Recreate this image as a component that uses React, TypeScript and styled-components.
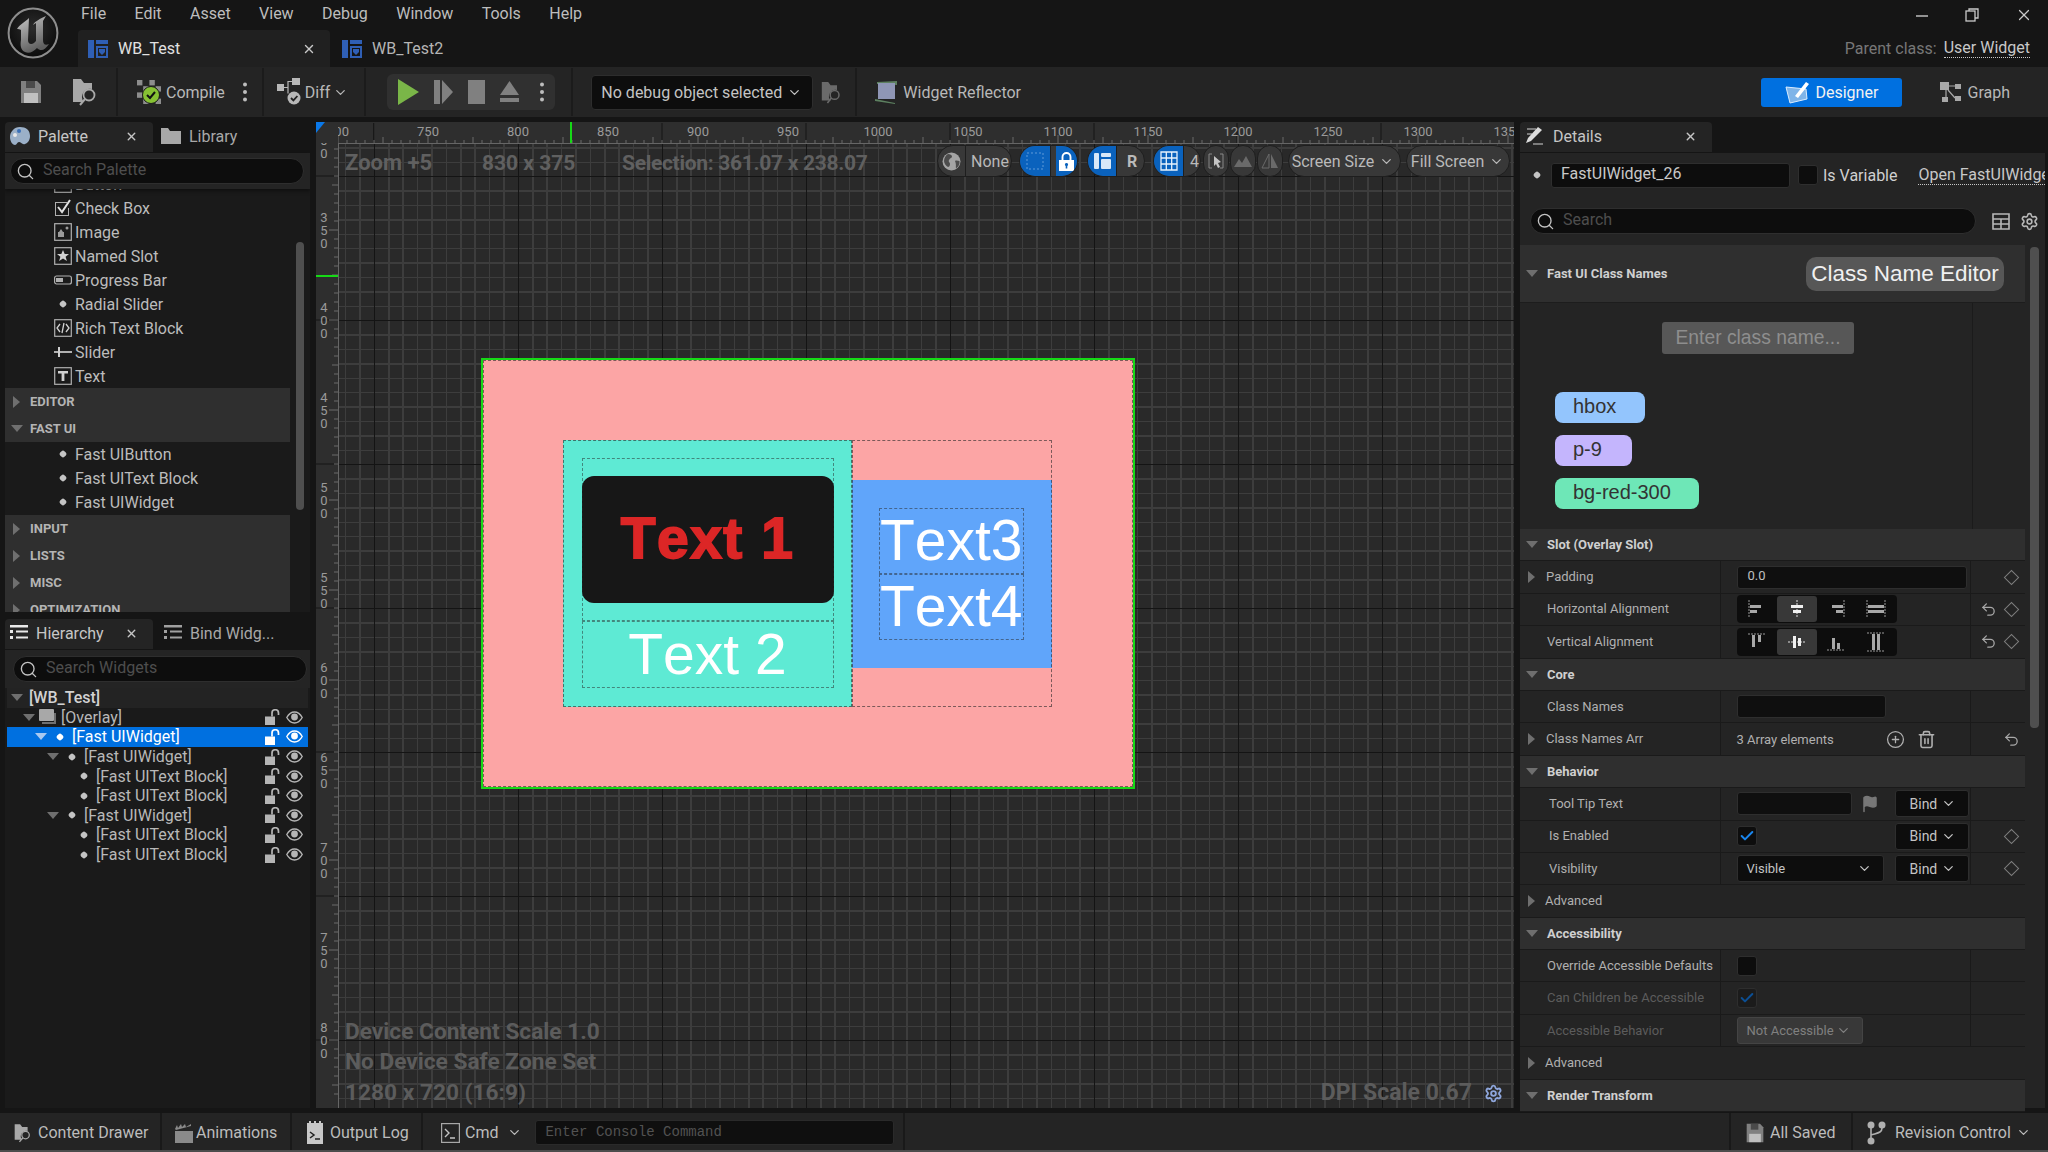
import React from "react";
import styled, { createGlobalStyle } from "styled-components";
import { ChevronDown, CirclePlus, Search, Settings, Trash2, Undo2, X, Check, Flag } from "lucide-react";

const GlobalStyle = createGlobalStyle`
html, body { margin: 0; padding: 0; background: #151515; }
* { box-sizing: border-box; }
`

const Page = styled.div`
width: 2048px;
height: 1152px;
overflow: hidden;
display: flex;
flex-direction: column;
background: #151515;
color: #c0c0c0;
font-family: Roboto, "Liberation Sans", sans-serif;
font-size: 16px;
`

/* ---------- title bar ---------- */
const TitleBar = styled.div`
height: 67px;
display: flex;
flex-shrink: 0;
`
const LogoSlot = styled.div`
width: 78px;
display: flex;
padding: 7px 0 0 7px;
`
const TitleMiddle = styled.div`
flex: 1;
display: flex;
flex-direction: column;
`
const MenuRow = styled.div`
height: 30px;
display: flex;
gap: 28.4px;
padding: 4px 0 0 3px;
color: #bdbdbd;
line-height: 19px;
`
const TabRow = styled.div`
height: 37px;
display: flex;
`
const DocTab = styled.div<{ $active?: boolean }>`
width: ${p => (p.$active ? "252px" : "auto")};
display: flex;
align-items: center;
gap: 10px;
padding: 0 14px 0 ${p => (p.$active ? "10px" : "12px")};
background: ${p => (p.$active ? "#202020" : "transparent")};
border-radius: 4px 4px 0 0;
color: ${p => (p.$active ? "#e2e2e2" : "#b5b5b5")};
`
const CloseIcon = styled(X)`
margin-left: auto;
flex-shrink: 0;
`
const TitleRight = styled.div`
width: 260px;
display: flex;
flex-direction: column;
align-items: flex-end;
padding-right: 18px;
`
const WindowButtons = styled.div`
height: 30px;
display: flex;
align-items: center;
gap: 36px;
margin-right: -3px;
color: #c9c9c9;
`
const ParentLine = styled.div`
height: 37px;
display: flex;
align-items: center;
gap: 7px;
color: #777;
`
const LinkText = styled.span`
color: #c8c8c8;
border-bottom: 1px dotted #c8c8c8;
line-height: 18px;
white-space: nowrap;
`

/* ---------- main toolbar ---------- */
const Toolbar = styled.div`
height: 50px;
flex-shrink: 0;
display: flex;
align-items: center;
background: #242424;
color: #b8b8b8;
`
const ToolItem = styled.div<{ $ml: number; $gap?: number }>`
margin-left: ${p => p.$ml}px;
display: flex;
align-items: center;
gap: ${p => p.$gap || 4}px;
flex-shrink: 0;
`
const ToolSep = styled.div<{ $ml: number; $hidden?: boolean }>`
margin-left: ${p => p.$ml}px;
width: 2px;
height: 48px;
background: ${p => (p.$hidden ? "transparent" : "#1b1b1b")};
flex-shrink: 0;
`
const PlayGroup = styled.div`
margin-left: 21px;
width: 168px;
height: 36px;
display: flex;
align-items: center;
background: #303030;
border-radius: 6px;
padding-left: 11px;
gap: 15px;
flex-shrink: 0;
`
const DebugSelect = styled.div`
margin-left: 18px;
width: 222px;
height: 35px;
display: flex;
align-items: center;
justify-content: space-between;
padding: 0 10px 0 9px;
background: #0d0d0d;
border: 1px solid #2d2d2d;
border-radius: 4px;
color: #c4c4c4;
white-space: nowrap;
flex-shrink: 0;
`
const DesignerButton = styled.div`
margin-left: auto;
width: 141px;
height: 29px;
display: flex;
align-items: center;
gap: 4px;
padding-left: 24px;
border-radius: 3px;
background: #0070e0;
color: #f2f2f2;
flex-shrink: 0;
`

/* ---------- main area ---------- */
const Main = styled.div`
height: 996px;
flex-shrink: 0;
display: flex;
padding: 5px 3px 5px 5px;
gap: 6px;
`
const LeftColumn = styled.div`
width: 305px;
display: flex;
flex-direction: column;
gap: 7px;
`
const PanelTabs = styled.div`
height: 30px;
display: flex;
flex-shrink: 0;
margin-bottom: 1px;
`
const PanelTab = styled.div<{ $active?: boolean; $w: number; $pl?: number; $gap?: number }>`
width: ${p => p.$w}px;
display: flex;
align-items: center;
gap: ${p => p.$gap || 8}px;
padding-left: ${p => p.$pl || (p.$active ? 5 : 8)}px;
padding-right: 15px;
padding-bottom: 2px;
background: ${p => (p.$active ? "#242424" : "transparent")};
border-radius: 4px 4px 0 0;
color: ${p => (p.$active ? "#c6c6c6" : "#a8a8a8")};
white-space: nowrap;
& > svg { flex-shrink: 0; }
`
const PalettePanel = styled.div`
height: 490px;
display: flex;
flex-direction: column;
position: relative;
overflow: hidden;
flex-shrink: 0;
`
const SearchBand = styled.div`
height: 36px;
flex-shrink: 0;
display: flex;
align-items: center;
padding: 0 6px 0 5px;
background: #242424;
position: relative;
z-index: 1;
box-shadow: 0 2px 4px rgba(0, 0, 0, 0.45);
`
const SearchField = styled.div<{ $w?: number }>`
width: ${p => (p.$w ? `${p.$w}px` : "100%")};
height: 26px;
display: flex;
align-items: center;
gap: 8px;
padding-left: 5px;
background: #0d0d0d;
border: 1px solid #2e2e2e;
border-radius: 13px;
color: #4e4e4e;
flex-shrink: 0;
& > svg { color: #c4c4c4; }
`
const SearchHint = styled.span`
margin-top: -3px;
`
const PaletteList = styled.div`
flex: 1;
background: #1a1a1a;
overflow: hidden;
`
const PaletteItem = styled.div<{ $clipped?: boolean }>`
height: 24px;
margin-top: ${p => (p.$clipped ? "-17px" : "0")};
display: flex;
align-items: center;
padding-left: 48px;
gap: 3px;
color: #bcbcbc;
`
const IconSlot = styled.span`
width: 19px;
display: flex;
justify-content: center;
`
const PaletteGroup = styled.div`
padding-bottom: 1px;
`
const CatHeader = styled.div`
height: 27px;
width: 285px;
display: flex;
align-items: center;
background: #2f2f2f;
color: #b4b4b4;
font-size: 13px;
font-weight: 700;
padding-left: 5px;
gap: 7px;
& > span:first-child { width: 13px; }
`
const CaretBox = styled.span`
display: flex;
justify-content: center;
align-items: center;
`
const Caret = styled.span<{ $open?: boolean; $white?: boolean }>`
display: block;
width: 0;
height: 0;
${p =>
    p.$open
        ? `border-left: 6px solid transparent; border-right: 6px solid transparent; border-top: 7px solid ${p.$white ? "#a8c8f0" : "#6f6f6f"};`
        : `border-top: 6px solid transparent; border-bottom: 6px solid transparent; border-left: 7px solid #6f6f6f;`}
`
const Dot = styled.span<{ $light?: boolean }>`
display: block;
width: 6px;
height: 6px;
border-radius: 2px;
transform: rotate(45deg);
background: ${p => (p.$light ? "#ffffff" : "#c4c4c4")};
`
const PaletteScroll = styled.div`
position: absolute;
left: 291px;
top: 120px;
width: 8px;
height: 268px;
border-radius: 4px;
background: #4f4f4f;
`
const HierarchyPanel = styled.div`
flex: 1;
display: flex;
flex-direction: column;
overflow: hidden;
`
const HierarchySearch = styled.div`
height: 38px;
flex-shrink: 0;
display: flex;
align-items: center;
padding: 0 3px 0 8px;
background: #242424;
`
const TreeBox = styled.div`
flex: 1;
background: #1a1a1a;
padding: 0 2px 0 2px;
`
const TreeRow = styled.div<{ $depth: number; $selected?: boolean; $root?: boolean }>`
height: 19.6px;
display: flex;
align-items: center;
padding-left: ${p => 4 + 12 * p.$depth}px;
padding-right: 5px;
background: ${p => (p.$selected ? "#0070e0" : p.$root ? "#232323" : "transparent")};
color: ${p => (p.$selected ? "#ffffff" : p.$root ? "#d2d2d2" : "#b8b8b8")};
font-weight: ${p => (p.$root ? 500 : 400)};
white-space: nowrap;
`
const TreeArrow = styled.span`
width: 12px;
display: flex;
justify-content: center;
flex-shrink: 0;
`
const TreeIcon = styled.span<{ $w: number }>`
width: ${p => p.$w}px;
display: flex;
justify-content: center;
flex-shrink: 0;
`
const TreeActions = styled.span`
margin-left: auto;
display: flex;
align-items: center;
gap: 6px;
`

/* ---------- designer canvas ---------- */
const Center = styled.div`
width: 1198px;
display: grid;
grid-template-columns: 22px 1fr;
grid-template-rows: 21px 1fr;
background: #2e2e2e;
overflow: hidden;
`
const Corner = styled.div`
width: 0;
height: 0;
border-top: 11px solid #0a78e8;
border-right: 9px solid transparent;
`
const Canvas = styled.div`
position: relative;
overflow: hidden;
background-color: #292929;
background-image:
    repeating-linear-gradient(to right, transparent 0 34.7px, #141414 34.7px 36px, transparent 36px 144px),
    repeating-linear-gradient(to bottom, transparent 0 32px, #141414 32px 33.3px, transparent 33.3px 144px),
    repeating-linear-gradient(to right, transparent 0 5.9px, #3d3d3d 5.9px 7.4px, transparent 7.4px 14.4px),
    repeating-linear-gradient(to bottom, transparent 0 3.2px, #3d3d3d 3.2px 4.7px, transparent 4.7px 14.4px);
border-top: 1px solid #666;
border-left: 1px solid #666;
`
const ZoomInfo = styled.div`
position: absolute;
left: 6px;
top: 5px;
display: flex;
color: #606060;
font-size: 21px;
font-weight: 700;
line-height: 28px;
white-space: nowrap;
`
const ZoomPart = styled.span<{ $w: number; $fs?: number; $ls?: number }>`
width: ${p => p.$w}px;
font-size: ${p => p.$fs || 21}px;
letter-spacing: ${p => p.$ls || 0}px;
`
const DeviceInfo = styled.div`
position: absolute;
left: 6px;
bottom: 0;
color: #5c5c5c;
font-size: 22.7px;
font-weight: 700;
line-height: 30.5px;
white-space: nowrap;
`
const DpiInfo = styled.div`
position: absolute;
right: 11px;
bottom: 0;
display: flex;
align-items: center;
gap: 12px;
color: #5c5c5c;
font-size: 23px;
font-weight: 700;
line-height: 30px;
`
const ViewBar = styled.div`
position: absolute;
left: 598px;
top: 1px;
display: flex;
`
const Pill = styled.div<{ $ml: number; $w: number; $dim?: boolean; $pr?: number }>`
margin-left: ${p => p.$ml}px;
width: ${p => p.$w}px;
height: 32px;
display: flex;
align-items: center;
justify-content: center;
overflow: hidden;
border-radius: 16px;
padding-right: ${p => p.$pr || 0}px;
background: #383838;
border: 1px solid #1e1e1e;
color: ${p => (p.$dim ? "#6a6a6a" : "#bababa")};
white-space: nowrap;
flex-shrink: 0;
gap: 5px;
`
const PillSeg = styled.div<{ $w: number; $active?: boolean; $pr?: number }>`
width: ${p => p.$w}px;
height: 100%;
display: flex;
align-items: center;
justify-content: center;
padding-right: ${p => p.$pr || 0}px;
background: ${p => (p.$active ? "#0a62bd" : "transparent")};
border-right: 1px solid #1e1e1e;
flex-shrink: 0;
color: ${p => (p.$active ? "#ffffff" : "#bababa")};
&:last-child { border-right: none; flex: 1; }
`
const Artboard = styled.div`
position: absolute;
left: 142px;
top: 214px;
width: 654px;
height: 431px;
border: 2px solid #16d916;
background: #fca5a5;
padding: 80px;
display: flex;
outline: 1px dashed rgba(40, 40, 40, 0.6);
outline-offset: -3px;
font-family: "Liberation Sans", Arial, sans-serif;
font-size: 57px;
font-kerning: none;
color: #fff;
`
const LeftBlock = styled.div`
width: 289px;
height: 267px;
background: #5eead4;
padding: 18px 18.5px;
outline: 1px dashed rgba(40, 40, 40, 0.6);
outline-offset: -1px;
display: flex;
flex-direction: column;
`
const BlockTop = styled.div`
height: 163px;
padding: 18px 0;
outline: 1px dashed rgba(40, 40, 40, 0.5);
outline-offset: -1px;
`
const BlackCard = styled.div`
height: 127px;
border-radius: 12px;
background: #171717;
color: #dc2626;
font-weight: 700;
letter-spacing: 1.5px;
-webkit-text-stroke: 1.8px #dc2626;
padding-bottom: 4px;
display: flex;
align-items: center;
justify-content: center;
`
const TextBox = styled.div<{ $h: number }>`
height: ${p => p.$h}px;
display: flex;
align-items: center;
justify-content: center;
padding-bottom: 2px;
outline: 1px dashed rgba(40, 40, 40, 0.5);
outline-offset: -1px;
white-space: nowrap;
`
const RightBlock = styled.div`
width: 199.5px;
height: 267px;
display: flex;
align-items: center;
outline: 1px dashed rgba(40, 40, 40, 0.6);
outline-offset: -1px;
`
const BlueCard = styled.div`
width: 100%;
height: 188px;
background: #60a5fa;
padding: 28px 27.5px 0 26.5px;
display: flex;
flex-direction: column;
`

/* ---------- details ---------- */
const RightColumn = styled.div`
width: 525px;
display: flex;
flex-direction: column;
`
const DetailsTop = styled.div`
flex: 1;
background: #242424;
display: flex;
flex-direction: column;
min-height: 0;
`
const NameRow = styled.div`
height: 47px;
flex-shrink: 0;
display: flex;
align-items: flex-start;
padding-top: 10px;
padding-left: 14px;
white-space: nowrap;
overflow: hidden;
`
const NameInput = styled.div`
width: 239px;
height: 25px;
margin-left: 11px;
padding-left: 9px;
background: #0d0d0d;
border: 1px solid #2e2e2e;
border-radius: 3px;
color: #c8c8c8;
line-height: 20px;
flex-shrink: 0;
`
const CheckBox = styled.span<{ $dim?: boolean }>`
width: 20px;
height: 20px;
display: flex;
align-items: center;
justify-content: center;
background: ${p => (p.$dim ? "#1b1b1b" : "#0d0d0d")};
border: 1px solid #2e2e2e;
border-radius: 3px;
color: ${p => (p.$dim ? "#0c4f94" : "#1a86ee")};
flex-shrink: 0;
`
const DetailsSearch = styled.div`
height: 45px;
flex-shrink: 0;
display: flex;
align-items: flex-start;
padding: 8px 0 0 10px;
color: #b8b8b8;
`
const DetailsBody = styled.div`
flex: 1;
display: flex;
min-height: 0;
`
const Rows = styled.div`
width: 505px;
display: flex;
flex-direction: column;
flex-shrink: 0;
`
const DetailsScroll = styled.div`
width: 9px;
height: 481px;
margin: 2px 0 0 5px;
border-radius: 4px;
background: #4f4f4f;
`
const ClassHeader = styled.div`
height: 58px;
flex-shrink: 0;
display: flex;
align-items: center;
background: #2f2f2f;
padding-left: 6px;
gap: 9px;
color: #cfcfcf;
font-size: 13px;
font-weight: 700;
border-bottom: 1px solid #1d1d1d;
`
const EditorButton = styled.div`
margin-left: auto;
margin-right: 21px;
width: 198px;
height: 34px;
border-radius: 10px;
background: #575757;
color: #f0f0f0;
font-family: "Liberation Sans", Arial, sans-serif;
font-weight: 400;
font-size: 22.5px;
display: flex;
align-items: center;
justify-content: center;
white-space: nowrap;
`
const ClassBody = styled.div`
height: 226px;
flex-shrink: 0;
width: 453px;
border-right: 1px solid #1b1b1b;
padding: 19px 0 0 35px;
display: flex;
flex-direction: column;
align-items: flex-start;
font-family: "Liberation Sans", Arial, sans-serif;
`
const ClassInput = styled.div`
width: 192px;
height: 32px;
margin-left: 107px;
margin-bottom: 38px;
border-radius: 3px;
background: #575757;
color: #8e8e8e;
font-size: 19.3px;
display: flex;
align-items: center;
justify-content: center;
white-space: nowrap;
`
const Chip = styled.div<{ $bg: string; $w: number }>`
width: ${p => p.$w}px;
height: 31px;
margin-bottom: 12px;
padding-left: 18px;
border-radius: 8px;
background: ${p => p.$bg};
color: #333;
font-size: 20px;
line-height: 29px;
`
const SectionRow = styled.div`
height: 32.4px;
flex-shrink: 0;
display: flex;
align-items: center;
padding-left: 6px;
gap: 9px;
background: #2f2f2f;
border-bottom: 1px solid #1a1a1a;
color: #cfcfcf;
font-size: 13px;
font-weight: 700;
`
const AdvancedRow = styled(SectionRow)`
background: #242424;
font-weight: 400;
color: #b0b0b0;
padding-left: 8px;
gap: 10px;
`
const PropRow = styled.div`
height: 32.4px;
flex-shrink: 0;
display: grid;
grid-template-columns: 201px 249.5px 1fr;
background: #242424;
border-bottom: 1px solid #1a1a1a;
font-size: 13px;
`
const PropLabel = styled.div<{ $dim?: boolean; $x: number }>`
display: flex;
align-items: center;
padding-left: ${p => p.$x}px;
padding-bottom: 1px;
color: ${p => (p.$dim ? "#5c5c5c" : "#b0b0b0")};
border-right: 1px solid #1a1a1a;
white-space: nowrap;
gap: 11px;
`
const PropValue = styled.div`
display: flex;
align-items: center;
padding-left: 15.5px;
border-right: 1px solid #1a1a1a;
color: #b0b0b0;
white-space: nowrap;
`
const PropEnd = styled.div`
display: flex;
align-items: center;
justify-content: flex-end;
gap: 9px;
padding-right: 5px;
color: #a8a8a8;
`
const FieldBox = styled.div<{ $w: number }>`
width: ${p => p.$w}px;
height: 23px;
padding-left: 10px;
background: #0f0f0f;
border: 1px solid #2e2e2e;
border-radius: 3px;
color: #c0c0c0;
line-height: 17px;
flex-shrink: 0;
`
const AlignGroup = styled.div`
width: 160px;
height: 28px;
display: flex;
padding: 1px;
background: #0d0d0d;
border-radius: 4px;
`
const AlignCell = styled.div<{ $active?: boolean }>`
flex: 1;
display: flex;
align-items: center;
justify-content: center;
border-radius: 3px;
background: ${p => (p.$active ? "#383838" : "transparent")};
`
const Dropdown = styled.div<{ $w: number; $ml?: number; $dim?: boolean }>`
width: ${p => p.$w}px;
height: 27px;
margin-left: ${p => p.$ml || 0}px;
display: flex;
align-items: center;
justify-content: space-between;
padding: 0 11px 0 9px;
background: ${p => (p.$dim ? "#383838" : "#0d0d0d")};
border: 1px solid ${p => (p.$dim ? "#444" : "#2e2e2e")};
border-radius: 3px;
color: ${p => (p.$dim ? "#808080" : "#c4c4c4")};
flex-shrink: 0;
`
const BindBox = styled(Dropdown)`
font-size: 14px;
padding: 0 12px 0 14px;
`
const Diamond = styled.span`
width: 11px;
height: 11px;
margin-right: 3px;
border: 1px solid #7d7d7d;
transform: rotate(45deg);
flex-shrink: 0;
`

/* ---------- status bar ---------- */
const StatusBar = styled.div`
height: 39px;
flex-shrink: 0;
display: flex;
background: #242424;
border-bottom: 2px solid #4c4c4c;
color: #bcbcbc;
padding-left: 2px;
`
const StatusItem = styled.div<{ $w: number; $pl: number; $gap: number; $last?: boolean }>`
width: ${p => p.$w}px;
display: flex;
align-items: center;
gap: ${p => p.$gap}px;
padding-left: ${p => p.$pl}px;
padding-top: 2px;
border-right: ${p => (p.$last ? "none" : "2px solid #191919")};
white-space: nowrap;
flex-shrink: 0;
`
const ConsoleInput = styled.div`
width: 359px;
height: 25px;
margin-left: 8px;
padding-left: 9px;
background: #0f0f0f;
border: 1px solid #2a2a2a;
border-radius: 3px;
color: #525252;
font-family: "Liberation Mono", monospace;
font-size: 14px;
line-height: 22px;
`
const StatusSpacer = styled.div`
flex: 1;
border-right: 2px solid #191919;
`

/* ---------- icons ---------- */
const UeLogo = () => (
    <svg width="52" height="52" viewBox="0 0 52 52">
        <defs>
            <linearGradient id="ueU" x1="0" y1="0" x2="0.4" y2="1">
                <stop offset="0" stopColor="#c8c8c8" />
                <stop offset="1" stopColor="#5f5f5f" />
            </linearGradient>
            <radialGradient id="ueBg" cx="0.5" cy="0.4" r="0.6">
                <stop offset="0" stopColor="#2c2c2c" />
                <stop offset="1" stopColor="#0c0c0c" />
            </radialGradient>
        </defs>
        <circle cx="26" cy="26" r="24.4" fill="url(#ueBg)" stroke="#8d8d8d" strokeWidth="2" />
        <path d="M10 22C13 17 18 15 22 11L21 33C21 37 24 38 27 36L29 34L29 16L26 18C28 14 33 12 39 9L36 14L36 33C36 37 38 39 42 37C38 43 34 45 30 41C26 45 22 47 18 45C14 43 13 39 14 33L14 23C13 22 11 22 10 22Z" fill="url(#ueU)" />
    </svg>
);

const BlueprintIcon = () => (
    <svg width="20" height="20" viewBox="0 0 20 20">
        <rect x="0" y="1" width="6" height="18" fill="#2f5fb5" />
        <rect x="8" y="1" width="12" height="4" fill="#2f5fb5" />
        <path d="M8 7h12v12h-12z M10 9v8h8v-8z" fill="#2f5fb5" fillRule="evenodd" />
        <path d="M11 10h6v3l-3 3l-3-3z" fill="#2f5fb5" />
    </svg>
);

const FloppyIcon = ({ size = 24 }: { size?: number }) => (
    <svg width={size} height={size} viewBox="0 0 24 24">
        <path d="M2 1h16l4 4v18H2z" fill="#808080" />
        <rect x="7" y="1" width="9" height="7" fill="#4a4a4a" />
        <rect x="5" y="13" width="14" height="10" fill="#c0c0c0" />
    </svg>
);

const FolderSearchIcon = ({ w = 25, c = "#a8a8a8" }: { w?: number; c?: string }) => (
    <svg width={w} height={w + 3} viewBox="0 0 25 28">
        <path d="M1 1h8l3 4h8v6a8 8 0 0 0-8 13H1z" fill={c} />
        <circle cx="17" cy="17" r="5.5" fill="none" stroke={c} strokeWidth="1.8" />
        <path d="M13 21l-5 6" stroke={c} strokeWidth="2" />
    </svg>
);

const CompileIcon = () => (
    <svg width="25" height="25" viewBox="0 0 25 25">
        {[0, 1, 2, 3].map(r =>
            [0, 1, 2, 3].map(c =>
                (r + c) % 2 === 0 ? <rect key={`${r}${c}`} x={c * 6.2} y={r * 6.2} width="5.4" height="5.4" fill="#8d8d8d" /> : null
            )
        )}
        <circle cx="14" cy="15" r="8.5" fill="#86c133" stroke="#1c1c1c" strokeWidth="1" />
        <path d="M10 15l3 3l5-6" fill="none" stroke="#111" strokeWidth="2" />
    </svg>
);

const Kebab = ({ c = "#bdbdbd" }: { c?: string }) => (
    <svg width="6" height="22" viewBox="0 0 6 22">
        <circle cx="3" cy="3.5" r="2" fill={c} />
        <circle cx="3" cy="11" r="2" fill={c} />
        <circle cx="3" cy="18.5" r="2" fill={c} />
    </svg>
);

const DiffIcon = () => (
    <svg width="25" height="28" viewBox="0 0 25 28">
        <rect x="0" y="6" width="7" height="7" fill="#b8b8b8" />
        <rect x="15" y="0" width="8" height="7" fill="#b8b8b8" />
        <path d="M7 9.5h4V3.5h4M11 9.5v6" stroke="#b8b8b8" strokeWidth="1.2" fill="none" />
        <circle cx="17" cy="20" r="6.5" fill="#b8b8b8" />
        <path d="M14 20l2.4 2.4l4-4.4" stroke="#222" strokeWidth="1.8" fill="none" />
    </svg>
);

const ReflectorIcon = () => (
    <svg width="23" height="24" viewBox="0 0 23 24">
        <path d="M2 2l20-1v4l-20-1z" fill="#5d8060" />
        <rect x="3" y="3" width="17" height="16" fill="#8f96b5" />
        <path d="M0 19l20 4v1l-20-3z" fill="#5d8060" />
    </svg>
);

const DesignerIcon = () => (
    <svg width="26" height="24" viewBox="0 0 26 24">
        <path d="M1 7l20 2l1 10l-17 4z" fill="#7fb4e8" stroke="#d9ecff" strokeWidth="1" />
        <path d="M10 16L21 2l3 2L13 18z" fill="#fff" />
    </svg>
);

const GraphIcon = () => (
    <svg width="22" height="21" viewBox="0 0 22 21">
        <rect x="0" y="0" width="9" height="8" fill="#a8a8a8" />
        <rect x="15" y="2" width="6" height="5" fill="#a8a8a8" />
        <rect x="2" y="15" width="6" height="5" fill="#a8a8a8" />
        <rect x="15" y="14" width="6" height="5" fill="#a8a8a8" />
        <path d="M9 4h6M6 8v7M8 8l7 8" stroke="#a8a8a8" strokeWidth="1.2" fill="none" />
    </svg>
);

const PaletteIcon = () => (
    <svg width="20" height="20" viewBox="0 0 20 20">
        <path d="M10 1C4 1 0 6 0 11c0 5 3 8 5 8c2 0 2-3 4-3c2 0 3 3 6 2c3-1 5-4 5-8c0-6-4-9-10-9z" fill="#9bb0c8" />
        <circle cx="5" cy="9" r="2" fill="#e8e8e8" />
        <circle cx="9" cy="5" r="2" fill="#3a70b8" />
    </svg>
);

const FolderIcon = () => (
    <svg width="20" height="18" viewBox="0 0 20 18">
        <path d="M0 1h7l2 3h11v13H0z" fill="#a8a8a8" />
    </svg>
);

const ListIcon = ({ c }: { c: string }) => (
    <svg width="18" height="16" viewBox="0 0 18 16">
        <rect x="0" y="0" width="18" height="2.5" fill={c} />
        <rect x="0" y="5" width="3" height="3" fill={c} />
        <rect x="6" y="5.5" width="12" height="2" fill={c} />
        <rect x="0" y="11" width="3" height="3" fill={c} />
        <rect x="6" y="11.5" width="12" height="2" fill={c} />
    </svg>
);

const DetailsIcon = () => (
    <svg width="19" height="20" viewBox="0 0 19 20">
        <path d="M2 3h9M2 8h5M8 18h10" stroke="#999" strokeWidth="1.4" />
        <path d="M1 17l2-5L13 1l4 3L6 15z" fill="#dcdcdc" />
    </svg>
);

const FramedIcon = ({ children }: { children: React.ReactNode }) => (
    <svg width="18" height="18" viewBox="0 0 18 18">
        <rect x="0.7" y="0.7" width="16.6" height="16.6" fill="none" stroke="#b0b0b0" strokeWidth="1.2" />
        {children}
    </svg>
);

const OverlayIcon = () => (
    <svg width="18" height="17" viewBox="0 0 18 17">
        <rect x="0" y="0" width="15" height="12" rx="1" fill="#a8a8a8" />
        <path d="M3 13h12v-9h2v11H3z" fill="#707070" />
    </svg>
);

const OpenLockIcon = ({ c }: { c: string }) => (
    <svg width="15" height="16" viewBox="0 0 15 16">
        <rect x="0" y="7.5" width="10" height="8.5" fill={c} />
        <path d="M7 7.5V4a3 3 0 0 1 6.5 0v2" fill="none" stroke={c} strokeWidth="1.7" />
    </svg>
);

const EyeIcon = ({ c }: { c: string }) => (
    <svg width="17" height="13" viewBox="0 0 17 13">
        <path d="M0.8 6.5C3 2.5 6 1 8.5 1s5.5 1.5 7.7 5.5C14 10.5 11 12 8.5 12S3 10.5 0.8 6.5z" fill="none" stroke={c} strokeWidth="1.4" />
        <circle cx="8.5" cy="6" r="3.4" fill={c} />
    </svg>
);

const ClosedLockIcon = () => (
    <svg width="15" height="19" viewBox="0 0 15 19">
        <path d="M0 8h15v11H0z M7.5 11a1.6 1.6 0 0 0-.8 3v2.5h1.6V14a1.6 1.6 0 0 0-.8-3z" fill="#fff" fillRule="evenodd" />
        <path d="M3.5 8V5a4 4 0 0 1 8 0v3" fill="none" stroke="#fff" strokeWidth="1.9" />
    </svg>
);

const GlobeIcon = () => (
    <svg width="19" height="19" viewBox="0 0 19 19">
        <circle cx="9.5" cy="9.5" r="9" fill="#a4a4a4" />
        <path d="M6 2c2 0 4 1 4 2.5s-2 1.5-3 3.5s1 2 1 4s-1 3-2 3c-2-1-4-3.5-4-6c0-3 2-6 4-7zM13 9c1.5-1 3 0 4.5 0c.5 3-1 5.5-3.5 7.5c-.5-2.5.5-3.5-1-7.500z" fill="#4c4c4c" />
    </svg>
);

const TinyChevron = ({ c }: { c?: string }) => <ChevronDown size={15} strokeWidth={2} color={c || "currentColor"} />;

const AlignIcon = ({ kind, active }: { kind: string; active?: boolean }) => {
    const c = active ? "#f0f0f0" : "#a8a8a8";
    const guide = active ? "#e0e0e0" : "#9a9a9a";
    const hori: Record<string, React.ReactNode> = {
        hl: <><path d="M2 1v18" stroke={guide} strokeDasharray="2 1" /><rect x="3" y="6" width="11" height="3" fill={c} /><rect x="3" y="11" width="7" height="3" fill={c} /></>,
        hc: <><path d="M10 1v18" stroke={guide} strokeDasharray="2 1" /><rect x="4" y="6" width="12" height="3" fill={c} /><rect x="6" y="11" width="8" height="3" fill={c} /></>,
        hr: <><path d="M18 1v18" stroke={guide} strokeDasharray="2 1" /><rect x="6" y="6" width="11" height="3" fill={c} /><rect x="10" y="11" width="7" height="3" fill={c} /></>,
        hf: <><path d="M1 1v18M19 1v18" stroke={guide} strokeDasharray="2 1" /><rect x="2" y="6" width="16" height="3" fill={c} /><rect x="2" y="11" width="16" height="3" fill={c} /></>,
        vt: <><path d="M1 2h18" stroke={guide} strokeDasharray="2 1" /><rect x="5" y="3" width="3" height="12" fill={c} /><rect x="11" y="3" width="3" height="7" fill={c} /></>,
        vc: <><path d="M1 10h18" stroke={guide} strokeDasharray="2 1" /><rect x="6" y="4" width="3" height="12" fill={c} /><rect x="11" y="6" width="3" height="8" fill={c} /></>,
        vb: <><path d="M1 18h18" stroke={guide} strokeDasharray="2 1" /><rect x="6" y="6" width="3" height="11" fill={c} /><rect x="11" y="11" width="3" height="6" fill={c} /></>,
        vf: <><path d="M1 1h18M1 19h18" stroke={guide} strokeDasharray="2 1" /><rect x="6" y="2" width="3" height="16" fill={c} /><rect x="11" y="2" width="3" height="16" fill={c} /></>,
    };
    return <svg width="20" height="20" viewBox="0 0 20 20">{hori[kind]}</svg>;
};

/* ---------- rulers ---------- */
const TopRuler = () => {
    const x0 = 338;
    const ticks: number[] = [];
    for (let u = 695; u <= 1360; u += 5) ticks.push(u);
    const labels = [700, 750, 800, 850, 900, 950, 1000, 1050, 1100, 1150, 1200, 1250, 1300, 1350];
    const majors = [373.7, 518, 662, 806, 950, 1094, 1237, 1381];
    return (
        <svg width="1176" height="21" viewBox="0 0 1176 21" style={{ display: "block" }}>
            {majors.map(m => <path key={m} d={`M${m - x0} 1V21`} stroke="#141414" />)}
            {ticks.map(u => {
                const x = 518 + (u - 800) * 1.8 - x0;
                const h = u % 50 === 0 ? 8 : u % 25 === 0 ? 6 : 3;
                return <path key={u} d={`M${x} ${21 - h}V21`} stroke="#6a6a6a" />;
            })}
            <path d={`M${571 - x0} 0V21`} stroke="#16d916" strokeWidth="2" />
            {labels.map(u => (
                <text key={u} x={518 + (u - 800) * 1.8 - x0} y="14" textAnchor="middle" fill="#9a9a9a" fontSize="13" fontFamily="Roboto, sans-serif">{u}</text>
            ))}
        </svg>
    );
};

const LeftRuler = () => {
    const y0 = 143;
    const ticks: number[] = [];
    for (let u = 290; u <= 830; u += 5) ticks.push(u);
    const labels = [300, 350, 400, 450, 500, 550, 600, 650, 700, 750, 800];
    const majors = [176, 320, 464, 608, 752, 896, 1040];
    return (
        <svg width="22" height="965" viewBox="0 0 22 965" style={{ display: "block" }}>
            {majors.map(m => <path key={m} d={`M0 ${m - y0}H22`} stroke="#141414" />)}
            {ticks.map(u => {
                const y = 320 + (u - 400) * 1.8 - y0;
                const w = u % 50 === 0 ? 9 : u % 25 === 0 ? 6 : 4;
                return <path key={u} d={`M${22 - w} ${y}H22`} stroke="#6a6a6a" />;
            })}
            <path d={`M0 ${276 - y0}H22`} stroke="#16d916" strokeWidth="2" />
            {labels.map(u =>
                String(u).split("").map((d, i) => (
                    <text key={`${u}${i}`} x="8" y={320 + (u - 400) * 1.8 - y0 + (i - 1) * 12.7 + 5} textAnchor="middle" fill="#9a9a9a" fontSize="13" fontFamily="Roboto, sans-serif">{d}</text>
                ))
            )}
        </svg>
    );
};

/* ---------- data ---------- */
const menus = ["File", "Edit", "Asset", "View", "Debug", "Window", "Tools", "Help"];

const paletteIcons: Record<string, React.ReactNode> = {
    "Button": <FramedIcon>{null}</FramedIcon>,
    "Check Box": <svg width="18" height="18" viewBox="0 0 18 18"><path d="M1 3h12v1H2v12h12V9h1v8H1z" fill="#b0b0b0" /><path d="M4 8l4 5l8-12" fill="none" stroke="#e0e0e0" strokeWidth="2" /></svg>,
    "Image": <FramedIcon><path d="M4 14V9h1l2-3l2 3h1v5z" fill="#9a9a9a" /><circle cx="13" cy="5" r="1.5" fill="#9a9a9a" /></FramedIcon>,
    "Named Slot": <FramedIcon><path d="M9 3l1.7 4h4.3l-3.4 2.7l1.3 4.3L9 11.5L5.1 14l1.3-4.3L3 7h4.3z" fill="#d0d0d0" /></FramedIcon>,
    "Progress Bar": <svg width="18" height="18" viewBox="0 0 18 18"><rect x="0.6" y="5" width="16.8" height="8" rx="2" fill="none" stroke="#b0b0b0" strokeWidth="1.2" /><rect x="2" y="7" width="7" height="4" fill="#b0b0b0" /></svg>,
    "Rich Text Block": <FramedIcon><path d="M6 5L3 9l3 4M12 5l3 4l-3 4M10 4L8 14" fill="none" stroke="#d0d0d0" strokeWidth="1.3" /></FramedIcon>,
    "Slider": <svg width="18" height="18" viewBox="0 0 18 18"><rect x="0" y="8" width="18" height="2" fill="#b0b0b0" /><rect x="4" y="4" width="2" height="10" fill="#d0d0d0" /></svg>,
    "Text": <FramedIcon><path d="M4 4h10v2.5h-3.6V14H7.6V6.5H4z" fill="#d0d0d0" /></FramedIcon>,
};

const tree = [
    { d: 3, open: true, label: "[Fast UIWidget]" },
    { d: 4, label: "[Fast UIText Block]" },
    { d: 4, label: "[Fast UIText Block]" },
    { d: 3, open: true, label: "[Fast UIWidget]" },
    { d: 4, label: "[Fast UIText Block]" },
    { d: 4, label: "[Fast UIText Block]" },
];

const Section = ({ title }: { title: string }) => (
    <SectionRow>
        <Caret $open />
        {title}
    </SectionRow>
);

const Actions = ({ light }: { light?: boolean }) => (
    <TreeActions>
        <OpenLockIcon c={light ? "#ffffff" : "#b5b5b5"} />
        <EyeIcon c={light ? "#ffffff" : "#b5b5b5"} />
    </TreeActions>
);

const Reset = () => <Undo2 size={17} strokeWidth={1.8} />;

const App: React.FunctionComponent<{}> = () => {
    return (
        <Page>
            <GlobalStyle />
            <TitleBar>
                <LogoSlot><UeLogo /></LogoSlot>
                <TitleMiddle>
                    <MenuRow>{menus.map(m => <span key={m}>{m}</span>)}</MenuRow>
                    <TabRow>
                        <DocTab $active><BlueprintIcon />WB_Test<CloseIcon size={14} strokeWidth={2.4} color="#c8c8c8" /></DocTab>
                        <DocTab><BlueprintIcon />WB_Test2</DocTab>
                    </TabRow>
                </TitleMiddle>
                <TitleRight>
                    <WindowButtons>
                        <svg width="14" height="14" viewBox="0 0 14 14"><path d="M1 8h12" stroke="#c9c9c9" strokeWidth="1.4" /></svg>
                        <svg width="14" height="14" viewBox="0 0 14 14"><rect x="1" y="3" width="9" height="10" fill="none" stroke="#c9c9c9" strokeWidth="1.3" /><path d="M4 3V1h9v9h-3" fill="none" stroke="#c9c9c9" strokeWidth="1.3" /></svg>
                        <X size={18} strokeWidth={1.6} />
                    </WindowButtons>
                    <ParentLine>Parent class: <LinkText>User Widget</LinkText></ParentLine>
                </TitleRight>
            </TitleBar>

            <Toolbar>
                <ToolItem $ml={19}><FloppyIcon /></ToolItem>
                <ToolItem $ml={29}><FolderSearchIcon /></ToolItem>
                <ToolSep $ml={19} />
                <ToolItem $ml={19}><CompileIcon />Compile</ToolItem>
                <ToolItem $ml={17}><Kebab /></ToolItem>
                <ToolSep $ml={14} />
                <ToolItem $ml={13} $gap={3}><DiffIcon />Diff<TinyChevron /></ToolItem>
                <ToolSep $ml={16} />
                <PlayGroup>
                    <svg width="21" height="26" viewBox="0 0 21 26"><path d="M0 0l21 13L0 26z" fill="#7ab648" /></svg>
                    <svg width="19" height="24" viewBox="0 0 19 24"><rect x="0" y="0" width="6" height="24" fill="#808080" /><path d="M8 0l11 12L8 24z" fill="#808080" /></svg>
                    <svg width="17" height="24" viewBox="0 0 17 24"><rect x="0" y="0" width="17" height="24" fill="#808080" /></svg>
                    <svg width="19" height="22" viewBox="0 0 19 22"><path d="M9.5 0L19 14H0z" fill="#808080" /><rect x="0" y="17" width="19" height="4" fill="#808080" /></svg>
                    <svg width="12" height="22" viewBox="0 0 12 22"><circle cx="8" cy="3.5" r="2" fill="#bdbdbd" /><circle cx="8" cy="11" r="2" fill="#bdbdbd" /><circle cx="8" cy="18.5" r="2" fill="#bdbdbd" /></svg>
                </PlayGroup>
                <ToolSep $ml={16} />
                <DebugSelect>No debug object selected<TinyChevron /></DebugSelect>
                <ToolItem $ml={8}><FolderSearchIcon w={20} c="#6a6a6a" /></ToolItem>
                <ToolSep $ml={14} />
                <ToolItem $ml={18} $gap={5}><ReflectorIcon />Widget Reflector</ToolItem>
                <DesignerButton><DesignerIcon />Designer</DesignerButton>
                <ToolItem $ml={38} $gap={5}><GraphIcon />Graph</ToolItem>
                <ToolSep $ml={36} $hidden />
            </Toolbar>

            <Main>
                <LeftColumn>
                    <PalettePanel>
                        <PanelTabs>
                            <PanelTab $active $w={148}><PaletteIcon />Palette<CloseIcon size={13} strokeWidth={2.6} /></PanelTab>
                            <PanelTab $w={120}><FolderIcon />Library</PanelTab>
                        </PanelTabs>
                        <SearchBand>
                            <SearchField><Search size={19} strokeWidth={1.7} /><SearchHint>Search Palette</SearchHint></SearchField>
                        </SearchBand>
                        <PaletteList>
                            {["Button", "Check Box", "Image", "Named Slot", "Progress Bar", "Radial Slider", "Rich Text Block", "Slider", "Text"].map((name, i) => (
                                <PaletteItem key={name} $clipped={i === 0}>
                                    <IconSlot>{paletteIcons[name] || <Dot />}</IconSlot>
                                    {name}
                                </PaletteItem>
                            ))}
                            <CatHeader><CaretBox><Caret /></CaretBox>EDITOR</CatHeader>
                            <CatHeader><CaretBox><Caret $open /></CaretBox>FAST UI</CatHeader>
                            <PaletteGroup>
                                {["Fast UIButton", "Fast UIText Block", "Fast UIWidget"].map(name => (
                                    <PaletteItem key={name}><IconSlot><Dot /></IconSlot>{name}</PaletteItem>
                                ))}
                            </PaletteGroup>
                            {["INPUT", "LISTS", "MISC", "OPTIMIZATION"].map(name => (
                                <CatHeader key={name}><CaretBox><Caret /></CaretBox>{name}</CatHeader>
                            ))}
                        </PaletteList>
                        <PaletteScroll />
                    </PalettePanel>

                    <HierarchyPanel>
                        <PanelTabs>
                            <PanelTab $active $w={148}><ListIcon c="#e8e8e8" />Hierarchy<CloseIcon size={13} strokeWidth={2.6} /></PanelTab>
                            <PanelTab $w={150} $pl={11} $gap={8}><ListIcon c="#a0a0a0" />Bind Widg...</PanelTab>
                        </PanelTabs>
                        <HierarchySearch>
                            <SearchField><Search size={19} strokeWidth={1.7} /><SearchHint>Search Widgets</SearchHint></SearchField>
                        </HierarchySearch>
                        <TreeBox>
                            <TreeRow $depth={0} $root>
                                <TreeArrow><Caret $open /></TreeArrow>
                                <span style={{ marginLeft: 6 }}>[WB_Test]</span>
                            </TreeRow>
                            <TreeRow $depth={1}>
                                <TreeArrow><Caret $open /></TreeArrow>
                                <TreeIcon $w={26}><OverlayIcon /></TreeIcon>[Overlay]
                                <Actions />
                            </TreeRow>
                            <TreeRow $depth={2} $selected>
                                <TreeArrow><Caret $open $white /></TreeArrow>
                                <TreeIcon $w={25}><Dot $light /></TreeIcon>[Fast UIWidget]
                                <Actions light />
                            </TreeRow>
                            {tree.map((row, i) => (
                                <TreeRow key={i} $depth={row.d}>
                                    <TreeArrow>{row.open && <Caret $open />}</TreeArrow>
                                    <TreeIcon $w={25}><Dot /></TreeIcon>{row.label}
                                    <Actions />
                                </TreeRow>
                            ))}
                        </TreeBox>
                    </HierarchyPanel>
                </LeftColumn>

                <Center>
                    <Corner />
                    <TopRuler />
                    <LeftRuler />
                    <Canvas>
                        <ZoomInfo>
                            <ZoomPart $w={137} $fs={22}>Zoom +5</ZoomPart>
                            <ZoomPart $w={140}>830 x 375</ZoomPart>
                            <ZoomPart $w={260} $ls={-0.3}>Selection: 361.07 x 238.07</ZoomPart>
                        </ZoomInfo>
                        <ViewBar>
                            <Pill $ml={0} $w={75}>
                                <PillSeg $w={29}><GlobeIcon /></PillSeg>
                                <PillSeg $w={46} $pr={3}>None</PillSeg>
                            </Pill>
                            <Pill $ml={7} $w={59}>
                                <PillSeg $w={31} $active><svg width="18" height="18" viewBox="0 0 18 18"><rect x="1" y="1" width="16" height="16" fill="none" stroke="#5f9ad8" strokeDasharray="2 2" /></svg></PillSeg>
                                <PillSeg $w={28} $active><ClosedLockIcon /></PillSeg>
                            </Pill>
                            <Pill $ml={9} $w={58}>
                                <PillSeg $w={29} $active><svg width="17" height="18" viewBox="0 0 17 18"><rect x="0" y="1" width="5" height="16" rx="1" fill="#d8e8f8" /><rect x="7" y="1" width="10" height="4" rx="1" fill="#d8e8f8" /><rect x="7" y="7" width="10" height="10" rx="1" fill="#d8e8f8" /></svg></PillSeg>
                                <PillSeg $w={29} $pr={2}><b>R</b></PillSeg>
                            </Pill>
                            <Pill $ml={8} $w={48}>
                                <PillSeg $w={30} $active><svg width="18" height="20" viewBox="0 0 18 20"><path d="M1 1h16v18H1zM6.3 1v18M11.7 1v18M1 7h16M1 13h16" fill="none" stroke="#e8f2fc" strokeWidth="1.3" /></svg></PillSeg>
                                <PillSeg $w={18}>4</PillSeg>
                            </Pill>
                            <Pill $ml={2} $w={26}><svg width="18" height="18" viewBox="0 0 18 18"><path d="M5 2H2v14h3M13 2h3v14h-3" fill="none" stroke="#888" /><path d="M7 4l7 6l-3 1l2 4l-2 1l-2-4l-2 2z" fill="#c4c4c4" /></svg></Pill>
                            <Pill $ml={1} $w={26} $dim><svg width="18" height="14" viewBox="0 0 18 14"><path d="M0 13L5 5l3 4l4-7l6 11z" fill="#6a6a6a" /></svg></Pill>
                            <Pill $ml={1} $w={26} $dim><svg width="18" height="18" viewBox="0 0 18 18"><path d="M8 2v14H1z" fill="none" stroke="#6a6a6a" /><path d="M10 2v14h7z" fill="#6a6a6a" /></svg></Pill>
                            <Pill $ml={5} $w={113} $pr={3}>Screen Size<TinyChevron /></Pill>
                            <Pill $ml={5} $w={104} $pr={1}>Fill Screen<TinyChevron /></Pill>
                        </ViewBar>

                        <Artboard>
                            <LeftBlock>
                                <BlockTop><BlackCard>Text 1</BlackCard></BlockTop>
                                <TextBox $h={67}>Text 2</TextBox>
                            </LeftBlock>
                            <RightBlock>
                                <BlueCard>
                                    <TextBox $h={66}>Text3</TextBox>
                                    <TextBox $h={66}>Text4</TextBox>
                                </BlueCard>
                            </RightBlock>
                        </Artboard>

                        <DeviceInfo>
                            <div>Device Content Scale 1.0</div>
                            <div>No Device Safe Zone Set</div>
                            <div>1280 x 720 (16:9)</div>
                        </DeviceInfo>
                        <DpiInfo>DPI Scale 0.67<Settings size={19} color="#8ea6dc" strokeWidth={2.4} /></DpiInfo>
                    </Canvas>
                </Center>

                <RightColumn>
                    <PanelTabs>
                        <PanelTab $active $w={192}><DetailsIcon /><span style={{ marginLeft: 1 }}>Details</span><CloseIcon size={13} strokeWidth={2.6} /></PanelTab>
                    </PanelTabs>
                    <DetailsTop>
                        <NameRow>
                            <span style={{ marginTop: 9 }}><Dot /></span>
                            <NameInput>FastUIWidget_26</NameInput>
                            <CheckBox style={{ marginLeft: 8, marginTop: 2 }} />
                            <span style={{ marginLeft: 5, marginTop: 3, color: "#d0d0d0" }}>Is Variable</span>
                            <span style={{ marginLeft: 21, marginTop: 2 }}><LinkText>Open FastUIWidget</LinkText></span>
                        </NameRow>
                        <DetailsSearch>
                            <SearchField $w={446}><Search size={19} strokeWidth={1.7} /><SearchHint>Search</SearchHint></SearchField>
                            <svg style={{ marginLeft: 16, marginTop: 5 }} width="18" height="17" viewBox="0 0 18 17"><path d="M1 1h16v15H1zM1 6h16M1 11h16M9 6v10" fill="none" stroke="#b8b8b8" strokeWidth="1.6" /></svg>
                            <Settings style={{ marginLeft: 10, marginTop: 4 }} size={19} strokeWidth={2} />
                        </DetailsSearch>
                        <DetailsBody>
                            <Rows>
                                <ClassHeader>
                                    <Caret $open />Fast UI Class Names
                                    <EditorButton>Class Name Editor</EditorButton>
                                </ClassHeader>
                                <ClassBody>
                                    <ClassInput>Enter class name...</ClassInput>
                                    <Chip $bg="#93c5fd" $w={90}>hbox</Chip>
                                    <Chip $bg="#c4b5fd" $w={77}>p-9</Chip>
                                    <Chip $bg="#6ee7b7" $w={144}>bg-red-300</Chip>
                                </ClassBody>

                                <Section title="Slot (Overlay Slot)" />
                                <PropRow>
                                    <PropLabel $x={8}><Caret />Padding</PropLabel>
                                    <PropValue><FieldBox $w={230}>0.0</FieldBox></PropValue>
                                    <PropEnd><Diamond /></PropEnd>
                                </PropRow>
                                <PropRow>
                                    <PropLabel $x={27}>Horizontal Alignment</PropLabel>
                                    <PropValue>
                                        <AlignGroup>
                                            <AlignCell><AlignIcon kind="hl" /></AlignCell>
                                            <AlignCell $active><AlignIcon kind="hc" active /></AlignCell>
                                            <AlignCell><AlignIcon kind="hr" /></AlignCell>
                                            <AlignCell><AlignIcon kind="hf" /></AlignCell>
                                        </AlignGroup>
                                    </PropValue>
                                    <PropEnd><Reset /><Diamond /></PropEnd>
                                </PropRow>
                                <PropRow>
                                    <PropLabel $x={27}>Vertical Alignment</PropLabel>
                                    <PropValue>
                                        <AlignGroup>
                                            <AlignCell><AlignIcon kind="vt" /></AlignCell>
                                            <AlignCell $active><AlignIcon kind="vc" active /></AlignCell>
                                            <AlignCell><AlignIcon kind="vb" /></AlignCell>
                                            <AlignCell><AlignIcon kind="vf" /></AlignCell>
                                        </AlignGroup>
                                    </PropValue>
                                    <PropEnd><Reset /><Diamond /></PropEnd>
                                </PropRow>

                                <Section title="Core" />
                                <PropRow>
                                    <PropLabel $x={27}>Class Names</PropLabel>
                                    <PropValue><FieldBox $w={149} /></PropValue>
                                    <PropEnd />
                                </PropRow>
                                <PropRow>
                                    <PropLabel $x={8}><Caret />Class Names Arr</PropLabel>
                                    <PropValue>
                                        3 Array elements
                                        <CirclePlus style={{ marginLeft: 52 }} size={19} strokeWidth={1.6} />
                                        <Trash2 style={{ marginLeft: 12 }} size={19} strokeWidth={2} />
                                    </PropValue>
                                    <PropEnd><Reset /></PropEnd>
                                </PropRow>

                                <Section title="Behavior" />
                                <PropRow>
                                    <PropLabel $x={29}>Tool Tip Text</PropLabel>
                                    <PropValue>
                                        <FieldBox $w={115} />
                                        <Flag style={{ marginLeft: 9 }} size={18} fill="#777" color="#777" />
                                        <BindBox $w={74} $ml={16}>Bind<TinyChevron /></BindBox>
                                    </PropValue>
                                    <PropEnd />
                                </PropRow>
                                <PropRow>
                                    <PropLabel $x={29}>Is Enabled</PropLabel>
                                    <PropValue>
                                        <CheckBox><Check size={16} strokeWidth={3} /></CheckBox>
                                        <BindBox $w={74} $ml={138}>Bind<TinyChevron /></BindBox>
                                    </PropValue>
                                    <PropEnd><Diamond /></PropEnd>
                                </PropRow>
                                <PropRow>
                                    <PropLabel $x={29}>Visibility</PropLabel>
                                    <PropValue>
                                        <Dropdown $w={147}>Visible<TinyChevron /></Dropdown>
                                        <BindBox $w={74} $ml={11}>Bind<TinyChevron /></BindBox>
                                    </PropValue>
                                    <PropEnd><Diamond /></PropEnd>
                                </PropRow>
                                <AdvancedRow><Caret />Advanced</AdvancedRow>

                                <Section title="Accessibility" />
                                <PropRow>
                                    <PropLabel $x={27}>Override Accessible Defaults</PropLabel>
                                    <PropValue><CheckBox /></PropValue>
                                    <PropEnd />
                                </PropRow>
                                <PropRow>
                                    <PropLabel $x={27} $dim>Can Children be Accessible</PropLabel>
                                    <PropValue><CheckBox $dim><Check size={16} strokeWidth={3} /></CheckBox></PropValue>
                                    <PropEnd />
                                </PropRow>
                                <PropRow>
                                    <PropLabel $x={27} $dim>Accessible Behavior</PropLabel>
                                    <PropValue><Dropdown $w={126} $dim>Not Accessible<TinyChevron /></Dropdown></PropValue>
                                    <PropEnd />
                                </PropRow>
                                <AdvancedRow><Caret />Advanced</AdvancedRow>
                                <Section title="Render Transform" />
                            </Rows>
                            <DetailsScroll />
                        </DetailsBody>
                    </DetailsTop>
                </RightColumn>
            </Main>

            <StatusBar>
                <StatusItem $w={160} $pl={12} $gap={7}>
                    <FolderSearchIcon w={17} />Content Drawer
                </StatusItem>
                <StatusItem $w={130} $pl={13} $gap={3}>
                    <svg width="18" height="20" viewBox="0 0 18 20"><path d="M0 8h18v12H0z" fill="#8a8a8a" /><path d="M0 6l2-4l1 3l3-4l1 3l3-3l1 3l5-3v2L1 7z" fill="#8a8a8a" /></svg>Animations
                </StatusItem>
                <StatusItem $w={131} $pl={15} $gap={7}>
                    <svg width="16" height="23" viewBox="0 0 16 23"><path d="M0 2h2V0h2v2h3V0h2v2h3V0h2v2h2v21H0z" fill="#c8c8c8" /><path d="M3 11l4 3l-4 3M8 18h5" stroke="#222" strokeWidth="1.5" fill="none" /></svg>Output Log
                </StatusItem>
                <StatusItem $w={482} $pl={18} $gap={5}>
                    <svg width="19" height="20" viewBox="0 0 19 20"><rect x="0.6" y="0.6" width="17.8" height="18.8" fill="none" stroke="#a8a8a8" strokeWidth="1.2" /><path d="M4 6l4 4l-4 4M9 15h5" stroke="#c4c4c4" strokeWidth="1.4" fill="none" /></svg>
                    Cmd<span style={{ marginLeft: 4, display: "flex" }}><TinyChevron /></span>
                    <ConsoleInput>Enter Console Command</ConsoleInput>
                </StatusItem>
                <StatusSpacer />
                <StatusItem $w={122} $pl={14} $gap={5}>
                    <FloppyIcon size={20} />All Saved
                </StatusItem>
                <StatusItem $w={195} $pl={14} $gap={5} $last>
                    <svg width="19" height="24" viewBox="0 0 19 24"><circle cx="4" cy="4" r="3.5" fill="#b0b0b0" /><circle cx="4" cy="20" r="3.5" fill="#b0b0b0" /><circle cx="15" cy="4" r="3.5" fill="#b0b0b0" /><path d="M4 4v16M15 7c0 5-5 5-11 7" stroke="#b0b0b0" strokeWidth="1.6" fill="none" /></svg>
                    <span style={{ marginLeft: 4 }}>Revision Control</span><TinyChevron />
                </StatusItem>
            </StatusBar>
        </Page>
    );
};

export default App;
